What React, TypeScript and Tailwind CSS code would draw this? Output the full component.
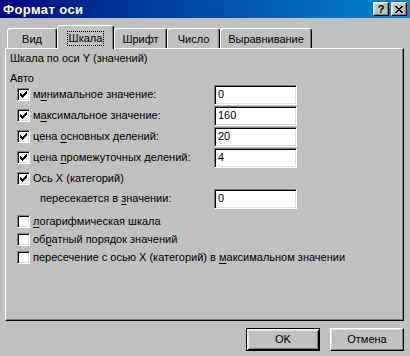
import type { ReactNode } from 'react'

const raised =
    'border border-t-white border-l-white border-r-black border-b-black shadow-[inset_-1px_-1px_#808080,inset_1px_1px_#dfdfdf]'
const sunken =
    'border border-t-[#808080] border-l-[#808080] border-r-white border-b-white shadow-[inset_1px_1px_#000,inset_-1px_-1px_#dfdfdf]'

function Check({ checked }: { checked: boolean }) {
    return (
        <span className={`w-[13px] h-[13px] shrink-0 bg-white flex items-center justify-center ${sunken}`}>
            {checked && (
                <svg width="7" height="7" viewBox="0 0 7 7" shapeRendering="crispEdges">
                    <path
                        d="M0 2h1v3H0z M1 3h1v3H1z M2 4h1v3H2z M3 3h1v3H3z M4 2h1v3H4z M5 1h1v3H5z M6 0h1v3H6z"
                        fill="#000"
                    />
                </svg>
            )}
        </span>
    )
}

function Field({ value }: { value: string }) {
    return (
        <div className={`w-[83px] h-[20px] bg-white pl-[3px] flex items-center ${sunken}`}>
            {value}
        </div>
    )
}

function U({ children }: { children: ReactNode }) {
    return <span className="underline underline-offset-[2px]">{children}</span>
}

function Row({ label, value }: { label: ReactNode; value: string }) {
    return (
        <div className="flex items-center h-[21px]">
            <div className="w-[204px] flex items-center pl-[7px] gap-[3px]">
                <Check checked />
                <span>{label}</span>
            </div>
            <Field value={value} />
        </div>
    )
}

function Option({ label }: { label: ReactNode }) {
    return (
        <div className="flex items-center h-[18px] pl-[7px] gap-[3px]">
            <Check checked={false} />
            <span>{label}</span>
        </div>
    )
}

const tabs = [
    { name: 'Вид', w: 'w-[50px]' },
    { name: 'Шкала', w: 'w-[57px]', active: true },
    { name: 'Шрифт', w: 'w-[53px]' },
    { name: 'Число', w: 'w-[53px]' },
    { name: 'Выравнивание', w: 'w-[92px]' },
]

export default function App() {
    return (
        <div className="w-[410px] h-[356px] bg-[#c0c0c0] font-['Liberation_Sans',sans-serif] text-[11px] leading-[13px] text-black overflow-hidden">
            <div className="h-[18px] flex items-center bg-gradient-to-r from-[#000080] to-[#1084d0] pl-[3px] pr-[3px]">
                <span className="flex-1 font-bold text-[13px] tracking-[0.4px] text-white">Формат оси</span>
                <div className="flex gap-[2px]">
                    <button className={`w-[16px] h-[14px] bg-[#c0c0c0] flex items-center justify-center font-bold text-[11px] leading-none ${raised}`}>
                        ?
                    </button>
                    <button className={`w-[16px] h-[14px] bg-[#c0c0c0] flex items-center justify-center ${raised}`}>
                        <svg width="8" height="7" viewBox="0 0 8 7" shapeRendering="crispEdges">
                            <path
                                d="M0 0h2v1H0z M6 0h2v1H6z M1 1h2v1H1z M5 1h2v1H5z M2 2h4v1H2z M3 3h2v1H3z M2 4h4v1H2z M1 5h2v1H1z M5 5h2v1H5z M0 6h2v1H0z M6 6h2v1H6z"
                                fill="#000"
                            />
                        </svg>
                    </button>
                </div>
            </div>

            <div className="relative z-10 mt-[7px] ml-[7px] h-[23px] flex items-end">
                {tabs.map((t) =>
                    t.active ? (
                        <div
                            key={t.name}
                            className={`${t.w} h-[24px] -mb-[1px] pt-[1px] bg-[#c0c0c0] flex items-center justify-center border-t border-l border-r border-t-white border-l-white border-r-black rounded-t-[3px] shadow-[inset_-1px_0_#808080]`}
                        >
                            <span className="border border-dotted border-black px-[1px]">{t.name}</span>
                        </div>
                    ) : (
                        <div
                            key={t.name}
                            className={`${t.w} h-[20px] pt-[2px] flex items-center justify-center border-t border-l border-r border-t-white border-l-white border-r-black rounded-t-[3px] shadow-[inset_-1px_0_#808080]`}
                        >
                            {t.name}
                        </div>
                    ),
                )}
            </div>

            <div className="ml-[5px] w-[399px] h-[273px] border border-t-white border-l-white border-r-black border-b-black shadow-[inset_-1px_-1px_#808080]">
                <div className="pl-[4px] pt-[3px]">
                    <div className="h-[13px]">Шкала по оси Y (значений)</div>
                    <div className="mt-[7px] h-[12px]">Авто</div>
                    <Row label={<>м<U>и</U>нимальное значение:</>} value="0" />
                    <Row label={<>м<U>а</U>ксимальное значение:</>} value="160" />
                    <Row label={<>цена <U>о</U>сновных делений:</>} value="20" />
                    <Row label={<>цена <U>п</U>ромежуточных делений:</>} value="4" />
                    <div className="flex items-center h-[20px] pl-[7px] gap-[3px]">
                        <Check checked />
                        <span>Ось X (категорий)</span>
                    </div>
                    <div className="flex items-center h-[21px]">
                        <div className="w-[204px] pl-[30px]">
                            пересекается в <U>з</U>начении:
                        </div>
                        <Field value="0" />
                    </div>
                    <div className="mt-[3px]">
                        <Option label={<><U>л</U>огарифмическая шкала</>} />
                        <Option label={<>об<U>р</U>атный порядок значений</>} />
                        <Option label={<>пересечение с осью X (категорий) в <U>м</U>аксимальном значении</>} />
                    </div>
                </div>
            </div>

            <div className="mt-[7px] pr-[6px] flex justify-end gap-[10px]">
                <button className="w-[74px] h-[23px] bg-[#c0c0c0] border border-black shadow-[inset_1px_1px_#fff,inset_-1px_-1px_#000,inset_2px_2px_#dfdfdf,inset_-2px_-2px_#808080]">
                    OK
                </button>
                <button className={`w-[74px] h-[23px] bg-[#c0c0c0] ${raised}`}>Отмена</button>
            </div>
        </div>
    )
}
